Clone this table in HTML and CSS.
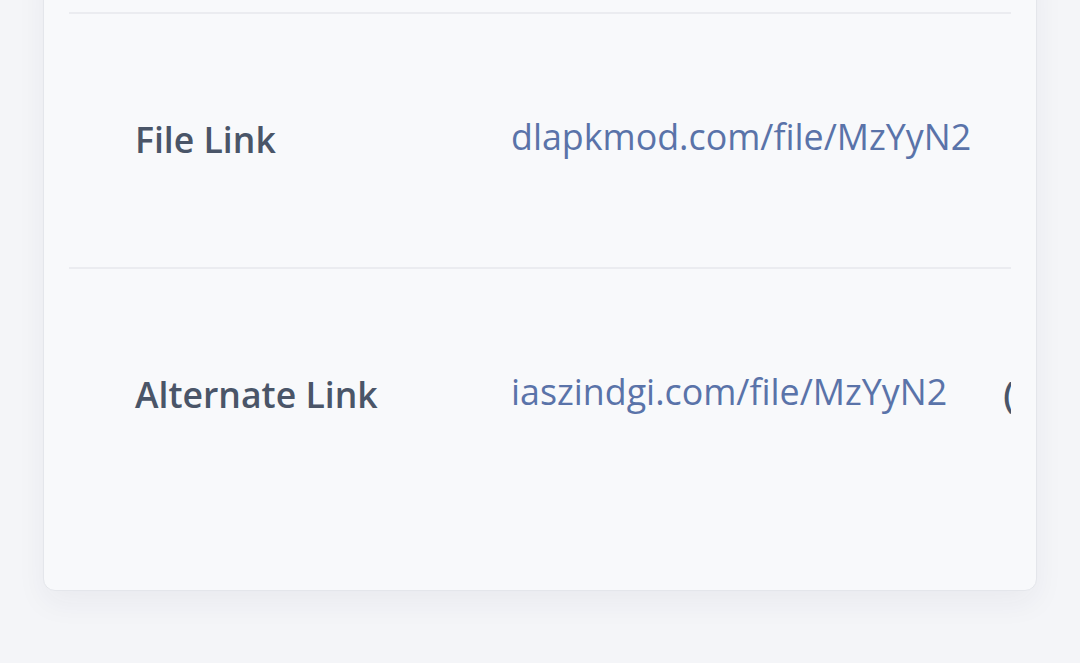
FILE: index.html
```html
<!DOCTYPE html>
<html>
<head>
<meta charset="utf-8">
<link rel="stylesheet" href="styles.css">
</head>
<body>
<div class="page">
  <div class="card">
    <div class="table">
      <div class="row">
        <div class="label">File Link</div>
        <div class="value"><a class="link" href="#">dlapkmod.com/file/MzYyN2</a></div>
      </div>
      <div class="row">
        <div class="label">Alternate Link</div>
        <div class="value"><a class="link" href="#">iaszindgi.com/file/MzYyN2</a><span class="copy">(copy)</span></div>
      </div>
    </div>
  </div>
</div>
</body>
</html>
```
FILE: styles.css
```css
html, body {
  margin: 0;
  padding: 0;
}
body {
  background: #f4f5f8;
  font-family: "Open Sans", "Noto Sans", sans-serif;
  height: 663px;
  overflow: hidden;
}
.page {
  padding: 0 43px;
}
.card {
  margin-top: -40px;
  background: #f8f9fb;
  border: 1px solid #e4e6eb;
  border-radius: 12px;
  box-shadow: 0 12px 30px rgba(30, 40, 70, 0.05);
  padding: 0 25px 68px 25px;
}
.table {
  overflow: hidden;
}
.row {
  display: grid;
  grid-template-columns: 376px 1fr;
  align-items: center;
  height: 253px;
  border-top: 2px solid #ebecf0;
}
.row:first-child {
  margin-top: 51px;
}
.label {
  padding-left: 66px;
  padding-bottom: 4px;
  font-size: 35.6px;
  font-weight: 600;
  color: #4a5568;
  white-space: nowrap;
}
.value {
  padding-left: 66px;
  padding-bottom: 9px;
  white-space: nowrap;
  display: flex;
  align-items: center;
}
.link {
  font-size: 35.8px;
  color: #5a73a9;
  text-decoration: none;
}
.copy {
  margin-left: 56px;
  font-size: 35.6px;
  font-weight: 600;
  color: #4a5568;
  padding-top: 6px;
}
```
